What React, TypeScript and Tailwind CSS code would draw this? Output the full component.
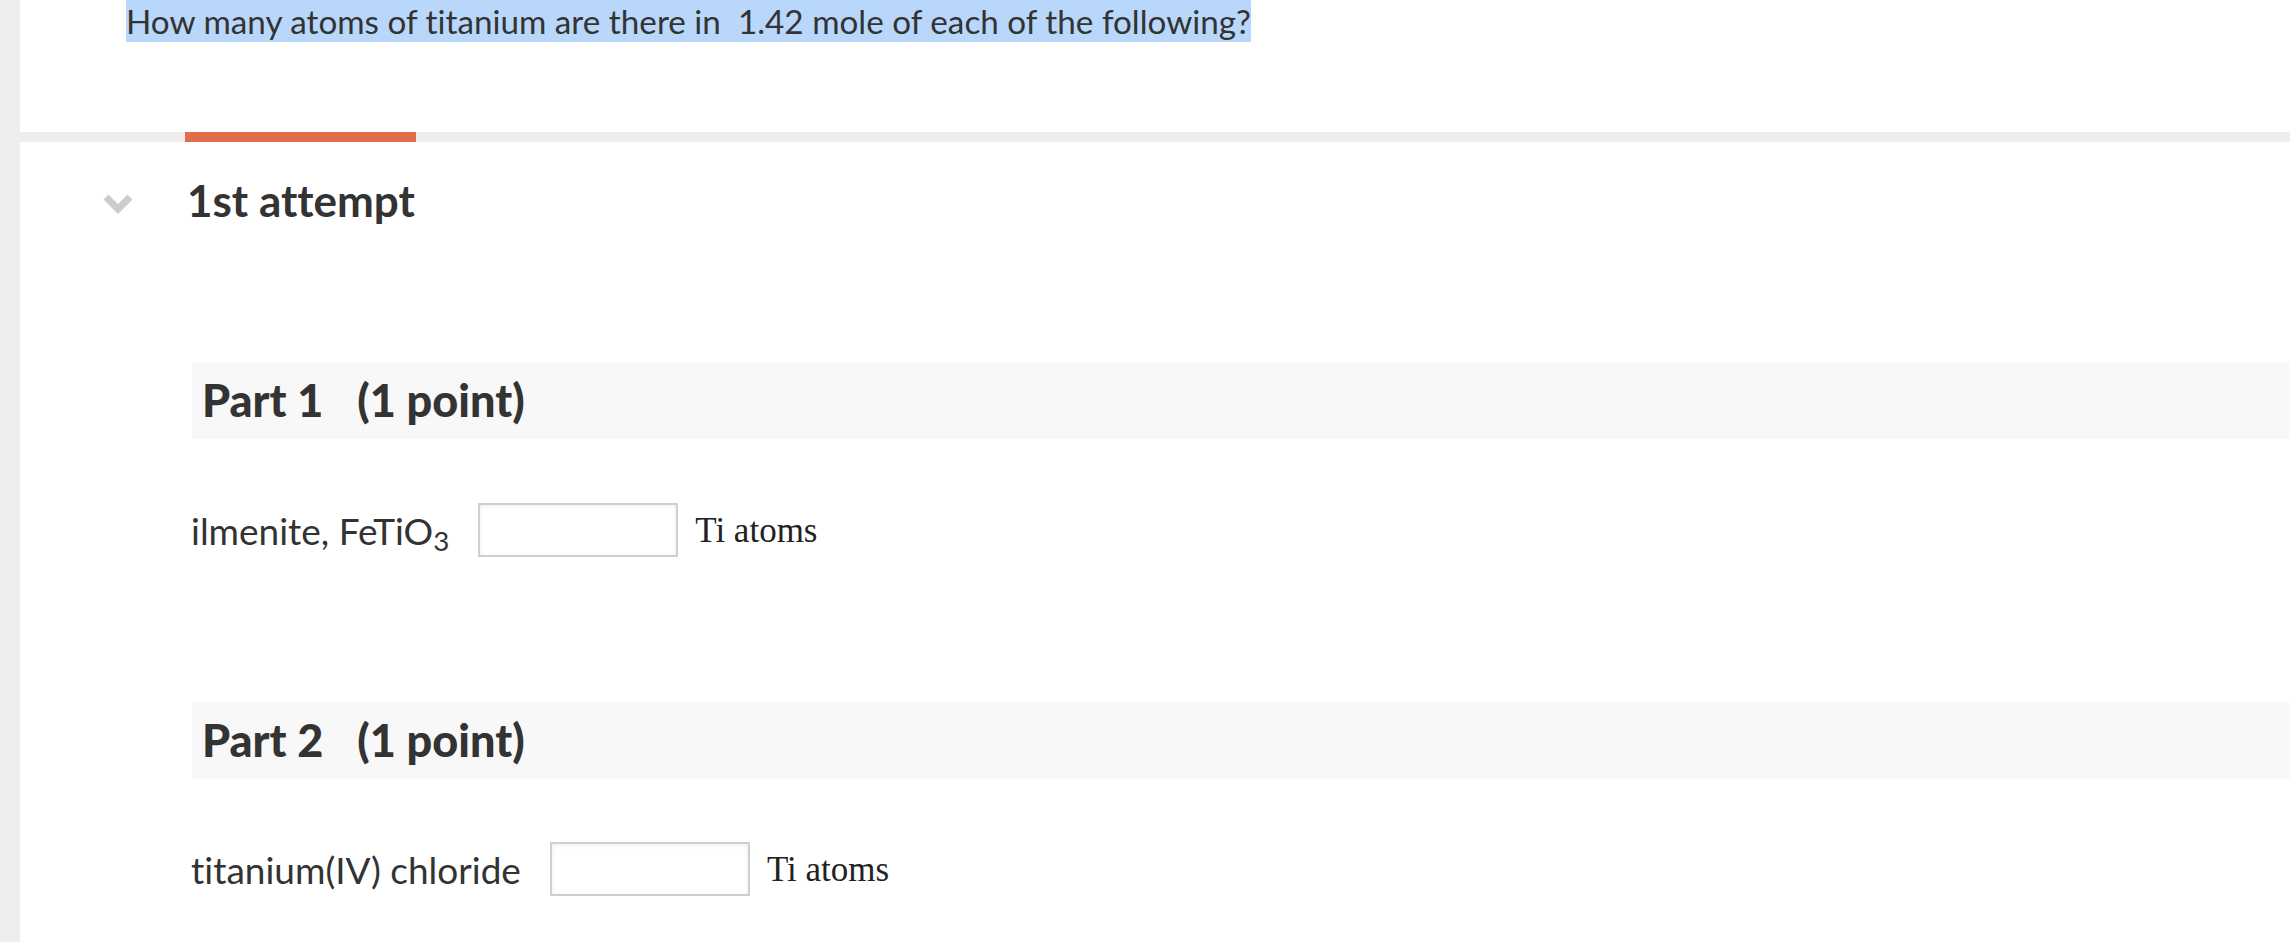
import React from 'react';

const lato = { fontFamily: 'Lato, "Open Sans", sans-serif' };

function Chevron() {
	return (
		<svg width="30" height="20" viewBox="0 0 30 20" className="shrink-0">
			<polyline points="3,3 15,15 27,3" fill="none" stroke="#cccccc" strokeWidth="7" />
		</svg>
	);
}

function PartHeader({ n }: { n: number }) {
	return (
		<div className="ml-[172px] flex h-[77px] items-center bg-[#f8f8f8] pl-[10px]">
			<span className="font-['Lato',sans-serif] text-[45px] font-black leading-none text-[#333]">
				Part {n}
				<span className="ml-[34px]">(1 point)</span>
			</span>
		</div>
	);
}

function AnswerRow({ label }: { label: React.ReactNode }) {
	return (
		<div className="ml-[171px] flex h-[54px] items-center">
			<span className="font-['Lato',sans-serif] text-[37px] leading-none text-[#333]">{label}</span>
			<input
				type="text"
				className="ml-[29px] h-[54px] w-[200px] border-2 border-[#cfcfcf] bg-white shadow-[inset_0_1px_4px_rgba(0,0,0,0.08)] outline-none"
			/>
			<span className="ml-[17px] font-['Liberation_Serif',serif] text-[35px] leading-none text-[#222]">
				Ti atoms
			</span>
		</div>
	);
}

export default function App() {
	return (
		<div className="flex min-h-screen bg-white [font-variant-ligatures:none]" style={lato}>
			<div className="w-[20px] shrink-0 bg-[#eeeeee]" />
			<div className="min-w-0 flex-1">
				<div className="pl-[106px]">
					<span className="inline-block h-[42px] bg-[#b9d7fb] font-['Lato',sans-serif] text-[33.25px] leading-[42px] text-[#333]">
						How many atoms of titanium are there in&nbsp; 1.42 mole of each of the following?
					</span>
				</div>

				<div className="mt-[90px] h-[10px] bg-[#eeeeee]">
					<div className="ml-[165px] h-full w-[231px] bg-[#e06c4b]" />
				</div>

				<div className="mt-[34px] flex h-[48px] items-center">
					<div className="ml-[83px] mt-[8px]">
						<Chevron />
					</div>
					<h2 className="ml-[54px] font-['Lato',sans-serif] text-[44px] font-bold leading-[48px] text-[#333]">
						1st attempt
					</h2>
				</div>

				<div className="mt-[138px]">
					<PartHeader n={1} />
					<div className="mt-[64px]">
						<AnswerRow
							label={
								<>
									ilmenite, FeTiO<sub>3</sub>
								</>
							}
						/>
					</div>
				</div>

				<div className="mt-[145px]">
					<PartHeader n={2} />
					<div className="mt-[63px]">
						<AnswerRow label="titanium(IV) chloride" />
					</div>
				</div>
			</div>
		</div>
	);
}
